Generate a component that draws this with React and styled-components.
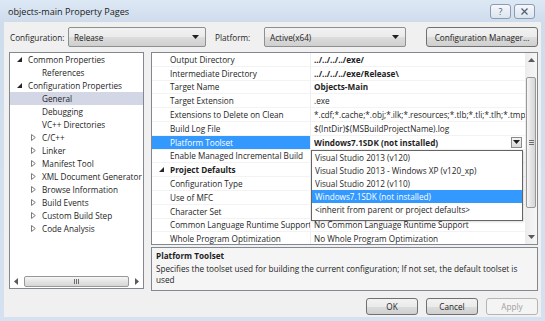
import React from "react";
import styled, { createGlobalStyle } from "styled-components";

const GlobalStyle = createGlobalStyle`
  html, body { margin: 0; padding: 0; }
  body {
    font-family: "Segoe UI", "Open Sans", "Noto Sans", sans-serif;
    font-size: 8.2px;
    color: #1e1e1e;
  }
  * { box-sizing: border-box; }
`;

const Window = styled.div`
  width: 545px;
  height: 321px;
  display: flex;
  flex-direction: column;
  overflow: hidden;
  background: linear-gradient(#dde8f5, #cfdcec 22px, #d5e1f0);
`;

const TitleBar = styled.div`
  height: 22px;
  display: flex;
  align-items: center;
  padding: 0 10px 0 8px;
  font-size: 9.1px;
  color: #1a1a1a;
`;

const Caption = styled.div`
  margin-left: auto;
  display: flex;
  gap: 3px;
`;

const CapButton = styled.div`
  width: ${(p) => p.w}px;
  height: 15px;
  border: 1px solid #8a9bb2;
  border-radius: 3px;
  background: linear-gradient(#f6f8fb, #dbe4ef);
  display: flex;
  align-items: center;
  justify-content: center;
  color: #4d5d72;
  font-size: 9px;
`;

const Body = styled.div`
  flex: 1;
  margin: 0 4px 4px;
  padding: 5px 3px 0 5px;
  background: #f0f0f0;
  display: flex;
  flex-direction: column;
`;

const ConfigRow = styled.div`
  height: 20px;
  display: flex;
  align-items: center;
`;

const Label = styled.span`
  margin-left: ${(p) => p.ml || 0}px;
  width: ${(p) => p.w}px;
`;

const Combo = styled.div`
  width: ${(p) => p.w}px;
  height: 20px;
  border: 1px solid #8e8f8f;
  border-radius: 2px;
  background: linear-gradient(#f2f2f2, #ebebeb 50%, #dddddd 51%, #cfcfcf);
  display: flex;
  align-items: center;
  padding: 0 6px 0 5px;
  & > span { flex: 1; }
`;

const Button = styled.div`
  width: ${(p) => p.w}px;
  height: ${(p) => p.h || 20}px;
  margin-left: ${(p) => (p.auto ? "auto" : "0")};
  border: 1px solid ${(p) => (p.disabled ? "#b5b5b5" : "#707070")};
  border-radius: 3px;
  background: ${(p) =>
    p.disabled ? "#f4f4f4" : "linear-gradient(#f2f2f2, #ebebeb 50%, #dddddd 51%, #cfcfcf)"};
  color: ${(p) => (p.disabled ? "#a0a0a0" : "#1e1e1e")};
  display: flex;
  align-items: center;
  justify-content: center;
`;

const Main = styled.div`
  height: 239px;
  margin-top: 5px;
  display: flex;
  gap: 7px;
  align-items: flex-start;
`;

const Tree = styled.div`
  width: 135px;
  height: 237px;
  border: 1px solid #828790;
  background: #fff;
  display: flex;
  flex-direction: column;
`;

const TreeRows = styled.div`
  flex: 1;
`;

const TreeRow = styled.div`
  height: 13px;
  display: flex;
  align-items: center;
  padding-left: ${(p) => 7 + p.level * 14}px;
  background: ${(p) => (p.selected ? "#d3d6e4" : "transparent")};
  white-space: nowrap;
`;

const Expander = styled.span`
  width: 11px;
  display: flex;
  align-items: center;
`;

const HScroll = styled.div`
  height: 12px;
  margin-bottom: 1px;
  display: flex;
  align-items: center;
`;

const ScrollArrow = styled.div`
  width: ${(p) => p.w || 12}px;
  height: ${(p) => p.h || 12}px;
  display: flex;
  align-items: center;
  justify-content: center;
  flex-shrink: 0;
`;

const HTrack = styled.div`
  flex: 1;
  padding: 0 2px;
`;

const HThumb = styled.div`
  height: 11px;
  border: 1px solid #989898;
  border-radius: 2px;
  background: linear-gradient(#f6f6f6, #e4e4e4 50%, #d6d6d6);
  display: flex;
  align-items: center;
  justify-content: center;
`;

const Right = styled.div`
  width: 387px;
  display: flex;
  flex-direction: column;
  gap: 2px;
`;

const Grid = styled.div`
  height: 193px;
  border: 1px solid #828790;
  background: #fff;
  display: flex;
`;

const GridBody = styled.div`
  flex: 1;
  position: relative;
  overflow: hidden;
`;

const PropRow = styled.div`
  height: 13.8px;
  display: flex;
  border-bottom: 1px solid #f3f3f3;
`;

const NameCell = styled.div`
  width: 158px;
  flex-shrink: 0;
  padding-left: ${(p) => (p.category ? 7 : 18)}px;
  display: flex;
  align-items: center;
  overflow: hidden;
  white-space: nowrap;
  font-weight: ${(p) => (p.category ? 700 : 400)};
  background: ${(p) => (p.selected ? "#3399ff" : "transparent")};
  color: ${(p) => (p.selected ? "#fff" : "inherit")};
`;

const ValueCell = styled.div`
  flex: 1;
  min-width: 0;
  border-left: 1px solid #eeeeee;
  padding-left: 3px;
  display: flex;
  align-items: center;
  overflow: hidden;
  white-space: nowrap;
  font-weight: ${(p) => (p.bold ? 700 : 400)};
  & > span { overflow: hidden; flex: 1; }
`;

const DropButton = styled.div`
  width: 11px;
  height: 11px;
  margin-right: 3px;
  flex-shrink: 0;
  border: 1px solid #8a8a8a;
  background: linear-gradient(#f4f4f4, #dadada);
  display: flex;
  align-items: center;
  justify-content: center;
`;

const DropList = styled.div`
  position: absolute;
  left: 159px;
  top: 96.6px;
  width: 212px;
  border: 1px solid #646464;
  background: #fff;
  padding-bottom: 4px;
  box-shadow: 1px 1px 2px rgba(0, 0, 0, 0.15);
`;

const DropItem = styled.div`
  height: 13px;
  padding-left: 3px;
  display: flex;
  align-items: center;
  white-space: nowrap;
  background: ${(p) => (p.active ? "#3399ff" : "transparent")};
  color: ${(p) => (p.active ? "#fff" : "inherit")};
`;

const VScroll = styled.div`
  width: 12px;
  background: linear-gradient(90deg, #ececec, #f6f6f6);
  display: flex;
  flex-direction: column;
`;

const VTrack = styled.div`
  flex: 1;
  padding: 10px 0 0 1px;
`;

const VThumb = styled.div`
  width: 10px;
  height: 131px;
  border: 1px solid #989898;
  border-radius: 2px;
  background: linear-gradient(90deg, #f6f6f6, #e4e4e4 50%, #d6d6d6);
  display: flex;
  align-items: center;
  justify-content: center;
`;

const Desc = styled.div`
  height: 44px;
  border: 1px solid #828790;
  background: #f5f5f5;
  padding: 2px 4px;
  line-height: 11px;
`;

const DescTitle = styled.div`
  font-weight: 700;
  margin-bottom: 2px;
`;

const ButtonRow = styled.div`
  margin-top: 7px;
  display: flex;
  justify-content: flex-end;
  gap: 8px;
`;

const OpenTri = () => (
  <svg width="5" height="5" viewBox="0 0 5 5">
    <polygon points="5,0 5,5 0,5" fill="#262626" />
  </svg>
);

const ClosedTri = () => (
  <svg width="5" height="7" viewBox="0 0 5 7">
    <polygon points="0.5,0.5 4.3,3.5 0.5,6.5" fill="none" stroke="#7a7a7a" strokeWidth="1" />
  </svg>
);

const DownArrow = ({ color = "#1e1e1e" }) => (
  <svg width="7" height="4" viewBox="0 0 7 4">
    <polygon points="0,0 7,0 3.5,4" fill={color} />
  </svg>
);

const SmallArrow = ({ dir }) => {
  const pts = {
    up: "0,4 7,4 3.5,0",
    down: "0,0 7,0 3.5,4",
    left: "4,0 4,7 0,3.5",
    right: "0,0 0,7 4,3.5",
  }[dir];
  const horiz = dir === "left" || dir === "right";
  return (
    <svg width={horiz ? 4 : 7} height={horiz ? 7 : 4} viewBox={horiz ? "0 0 4 7" : "0 0 7 4"}>
      <polygon points={pts} fill="#5a5a5a" />
    </svg>
  );
};

const Grip = ({ vertical }) =>
  vertical ? (
    <svg width="5" height="5" viewBox="0 0 5 5">
      <path d="M0 0.5H5M0 2.5H5M0 4.5H5" stroke="#6e6e6e" strokeWidth="1" />
    </svg>
  ) : (
    <svg width="5" height="5" viewBox="0 0 5 5">
      <path d="M0.5 0V5M2.5 0V5M4.5 0V5" stroke="#6e6e6e" strokeWidth="1" />
    </svg>
  );

const tree = [
  { label: "Common Properties", level: 0, exp: "open" },
  { label: "References", level: 1 },
  { label: "Configuration Properties", level: 0, exp: "open" },
  { label: "General", level: 1, selected: true },
  { label: "Debugging", level: 1 },
  { label: "VC++ Directories", level: 1 },
  { label: "C/C++", level: 1, exp: "closed" },
  { label: "Linker", level: 1, exp: "closed" },
  { label: "Manifest Tool", level: 1, exp: "closed" },
  { label: "XML Document Generator", level: 1, exp: "closed" },
  { label: "Browse Information", level: 1, exp: "closed" },
  { label: "Build Events", level: 1, exp: "closed" },
  { label: "Custom Build Step", level: 1, exp: "closed" },
  { label: "Code Analysis", level: 1, exp: "closed" },
];

// rows whose values sit under the open toolset list have no visible value
const props = [
  { name: "Output Directory", value: "../../../../exe/", bold: true },
  { name: "Intermediate Directory", value: "../../../../exe/Release\\", bold: true },
  { name: "Target Name", value: "Objects-Main", bold: true },
  { name: "Target Extension", value: ".exe" },
  {
    name: "Extensions to Delete on Clean",
    value: "*.cdf;*.cache;*.obj;*.ilk;*.resources;*.tlb;*.tli;*.tlh;*.tmp;*.rsp;*.pgc;*.pgd;*.meta;$(TargetPath)",
  },
  { name: "Build Log File", value: "$(IntDir)$(MSBuildProjectName).log" },
  { name: "Platform Toolset", value: "Windows7.1SDK (not installed)", bold: true, selected: true },
  { name: "Enable Managed Incremental Build", value: "" },
  { name: "Project Defaults", category: true },
  { name: "Configuration Type", value: "" },
  { name: "Use of MFC", value: "" },
  { name: "Character Set", value: "" },
  { name: "Common Language Runtime Support", value: "No Common Language Runtime Support" },
  { name: "Whole Program Optimization", value: "No Whole Program Optimization" },
];

const toolsets = [
  "Visual Studio 2013 (v120)",
  "Visual Studio 2013 - Windows XP (v120_xp)",
  "Visual Studio 2012 (v110)",
  "Windows7.1SDK (not installed)",
  "<inherit from parent or project defaults>",
];

export default function App() {
  return (
    <Window>
      <GlobalStyle />
      <TitleBar>
        objects-main Property Pages
        <Caption>
          <CapButton w={21}>?</CapButton>
          <CapButton w={21}>
            <svg width="7" height="7" viewBox="0 0 7 7">
              <path d="M0.5 0.5L6.5 6.5M6.5 0.5L0.5 6.5" stroke="#4d5d72" strokeWidth="1.2" />
            </svg>
          </CapButton>
        </Caption>
      </TitleBar>
      <Body>
        <ConfigRow>
          <Label ml={1} w={58}>Configuration:</Label>
          <Combo w={138}>
            <span>Release</span>
            <DownArrow />
          </Combo>
          <Label ml={9} w={49}>Platform:</Label>
          <Combo w={142}>
            <span>Active(x64)</span>
            <DownArrow />
          </Combo>
          <Button w={112} auto>
            Configuration Manager...
          </Button>
        </ConfigRow>
        <Main>
          <Tree>
            <TreeRows>
              {tree.map((t) => (
                <TreeRow key={t.label} level={t.level} selected={t.selected}>
                  <Expander>
                    {t.exp === "open" && <OpenTri />}
                    {t.exp === "closed" && <ClosedTri />}
                  </Expander>
                  {t.label}
                </TreeRow>
              ))}
            </TreeRows>
            <HScroll>
              <ScrollArrow>
                <SmallArrow dir="left" />
              </ScrollArrow>
              <HTrack>
                <HThumb>
                  <Grip />
                </HThumb>
              </HTrack>
              <ScrollArrow>
                <SmallArrow dir="right" />
              </ScrollArrow>
            </HScroll>
          </Tree>
          <Right>
            <Grid>
              <GridBody>
                {props.map((p) =>
                  p.category ? (
                    <PropRow key={p.name}>
                      <NameCell category>
                        <Expander>
                          <OpenTri />
                        </Expander>
                        {p.name}
                      </NameCell>
                      <ValueCell />
                    </PropRow>
                  ) : (
                    <PropRow key={p.name}>
                      <NameCell selected={p.selected}>{p.name}</NameCell>
                      <ValueCell bold={p.bold}>
                        <span>{p.value}</span>
                        {p.selected && (
                          <DropButton>
                            <DownArrow />
                          </DropButton>
                        )}
                      </ValueCell>
                    </PropRow>
                  )
                )}
                <DropList>
                  {toolsets.map((t) => (
                    <DropItem key={t} active={t.startsWith("Windows7")}>
                      {t}
                    </DropItem>
                  ))}
                </DropList>
              </GridBody>
              <VScroll>
                <ScrollArrow h={14}>
                  <SmallArrow dir="up" />
                </ScrollArrow>
                <VTrack>
                  <VThumb>
                    <Grip vertical />
                  </VThumb>
                </VTrack>
                <ScrollArrow h={14}>
                  <SmallArrow dir="down" />
                </ScrollArrow>
              </VScroll>
            </Grid>
            <Desc>
              <DescTitle>Platform Toolset</DescTitle>
              Specifies the toolset used for building the current configuration; If not set, the default
              toolset is used
            </Desc>
          </Right>
        </Main>
        <ButtonRow>
          <Button w={52} h={17}>
            OK
          </Button>
          <Button w={52} h={17}>
            Cancel
          </Button>
          <Button w={52} h={17} disabled>
            Apply
          </Button>
        </ButtonRow>
      </Body>
    </Window>
  );
}
